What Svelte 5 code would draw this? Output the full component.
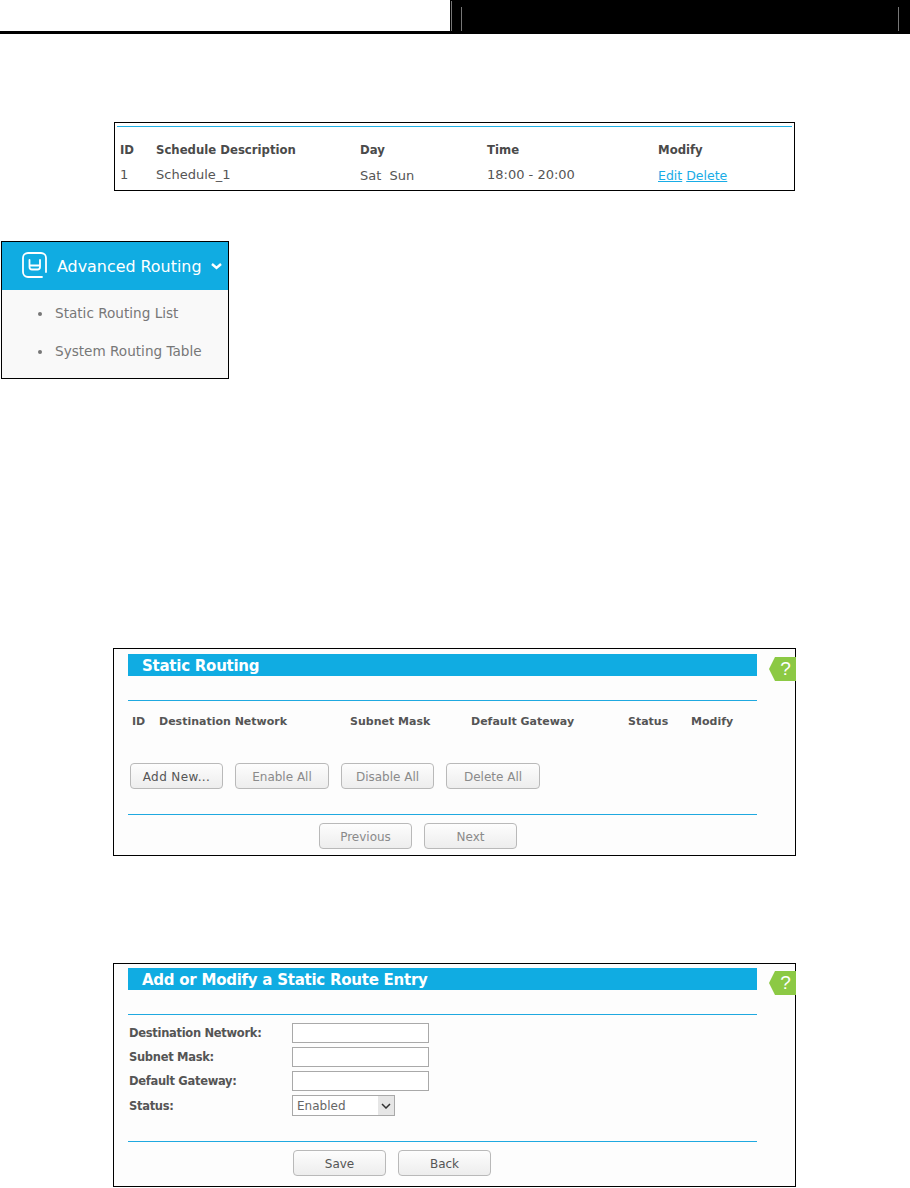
<script>
  const schedCols = ['ID', 'Schedule Description', 'Day', 'Time', 'Modify'];
  const routeCols = ['ID', 'Destination Network', 'Subnet Mask', 'Default Gateway', 'Status', 'Modify'];
  const fields = ['Destination Network:', 'Subnet Mask:', 'Default Gateway:'];
</script>

<div class="page">
  <header class="top">
    <div class="top-left"></div>
    <div class="top-right"><i class="tall"></i><i></i><i class="end"></i></div>
  </header>

  <section class="sched">
    <div class="sched-row heads">
      {#each schedCols as c}<b>{c}</b>{/each}
    </div>
    <div class="sched-row cells">
      <span>1</span><span>Schedule_1</span><span class="low">Sat&nbsp; Sun</span><span>18:00 - 20:00</span>
      <span class="low links"><a href="#e">Edit</a> <a href="#d">Delete</a></span>
    </div>
  </section>

  <nav class="menu">
    <div class="menu-head">
      <svg class="router" viewBox="0 0 25 26" width="25" height="26" fill="none" stroke="#fff" stroke-width="1.800" stroke-linecap="round">
        <path d="M24 20V6a5 5 0 0 0-5-5H6a5 5 0 0 0-5 5v14a5 5 0 0 0 5 5h14" />
        <path d="M7.500 8v7a2.500 2.500 0 0 0 2.500 2.500h5.500A2.500 2.500 0 0 0 18 15V8M7.500 13.500H18" />
      </svg>
      <span class="menu-title">Advanced Routing</span>
      <svg class="chev" viewBox="0 0 11 7" width="11" height="7" fill="none" stroke="#fff" stroke-width="2.400">
        <path d="M1 1l4.500 4 4.500-4" />
      </svg>
    </div>
    <ul>
      <li>Static Routing List</li>
      <li>System Routing Table</li>
    </ul>
  </nav>

  <section class="panel routing">
    <div class="bar">Static Routing</div>
    <span class="help">?</span>
    <hr class="rule first" />
    <div class="route-heads">
      {#each routeCols as c}<b>{c}</b>{/each}
    </div>
    <div class="actions">
      <button class="dark wide-text">Add New...</button>
      <button class="w94">Enable All</button>
      <button>Disable All</button>
      <button class="w94">Delete All</button>
    </div>
    <hr class="rule second" />
    <div class="pager">
      <button>Previous</button>
      <button>Next</button>
    </div>
  </section>

  <section class="panel entry">
    <div class="bar">Add or Modify a Static Route Entry</div>
    <span class="help">?</span>
    <hr class="rule first" />
    <div class="form">
      {#each fields as f}
        <label for={f}>{f}</label>
        <input id={f} type="text" />
      {/each}
      <label for="status">Status:</label>
      <div class="select">
        <select id="status"><option>Enabled</option><option>Disabled</option></select>
        <span class="arrow">
          <svg viewBox="0 0 10 6" width="10" height="6" fill="none" stroke="#333" stroke-width="1.500"><path d="M1 1l4 4 4-4" /></svg>
        </span>
      </div>
    </div>
    <hr class="rule third" />
    <div class="save">
      <button class="dark">Save</button>
      <button class="dark">Back</button>
    </div>
  </section>
</div>

<style>
  :global(body) { margin: 0; background: #fff; }
  .page {
    width: 910px;
    height: 1188px;
    overflow: hidden;
    font-family: "DejaVu Sans", Verdana, sans-serif;
    color: #4d4d4d;
  }

  .top { display: flex; height: 34px; }
  .top-left { width: 450px; box-sizing: border-box; border-bottom: 3px solid #000; }
  .top-right {
    flex: 1;
    background: #000;
    display: flex;
    padding: 0 11px 3px 1px;
    box-sizing: border-box;
  }
  .top-right i { width: 1px; background: #777; margin: 7px 0 0 9px; }
  .top-right .tall { margin: 1px 0 0 0; }
  .top-right .end { margin-left: auto; }

  .sched {
    box-sizing: border-box;
    margin: 88px 0 0 114px;
    width: 681px;
    height: 69px;
    border: 1px solid #000;
    padding: 3px 2px 0;
    font-size: 13px;
    color: #555;
  }
  .sched-row {
    display: grid;
    grid-template-columns: 36px 204px 127px 171px 1fr;
    padding-left: 3px;
  }
  .heads {
    box-sizing: border-box;
    border-top: 1px solid #1fb0e4;
    height: 36px;
    align-items: end;
    padding-bottom: 4px;
    line-height: 16px;
    font-size: 11.700px;
    font-weight: 700;
    color: #4a4a4a;
  }
  .cells { line-height: 16px; padding-top: 5px; }
  .low { padding-top: 1px; }
  .links { font-size: 12.500px; }
  .links a { color: #19ace6; }

  .menu {
    box-sizing: border-box;
    margin: 50px 0 0 1px;
    width: 228px;
    height: 138px;
    border: 1px solid #000;
    background: #f9f9f9;
  }
  .menu-head {
    height: 48px;
    background: #10ace2;
    display: flex;
    align-items: center;
    color: #fff;
    padding-left: 20px;
    gap: 10px;
  }
  .router { flex: none; margin-top: -2px; }
  .menu-title { font-size: 15.900px; white-space: nowrap; }
  .chev { margin-left: 0; flex: none; }
  .menu ul { margin: 0; padding: 0 0 0 53px; list-style: none; font-size: 13.600px; color: #777; }
  .menu li { position: relative; height: 38px; line-height: 20px; }
  .menu li:first-child { margin-top: 13px; }
  .menu li::before {
    content: "";
    position: absolute;
    left: -17px;
    top: 9px;
    width: 4px;
    height: 4px;
    border-radius: 50%;
    background: #777;
  }

  .panel {
    position: relative;
    box-sizing: border-box;
    margin-left: 113px;
    width: 683px;
    border: 1px solid #000;
    padding: 5px 38px 0 14px;
    background: #fdfdfd;
  }
  .routing { margin-top: 269px; height: 208px; }
  .entry { margin-top: 107px; height: 224px; padding-top: 4px; }
  .entry .help { top: 7px; }
  .bar {
    height: 22px;
    line-height: 24px;
    background: #10ace2;
    color: #fff;
    font-weight: 700;
    font-size: 15px;
    letter-spacing: -0.25px;
    padding-left: 14px;
  }
  .help {
    position: absolute;
    right: -1px;
    top: 8px;
    width: 27px;
    height: 24px;
    background: #8cc944;
    color: #fff;
    font: 19px/24px "Liberation Sans", sans-serif;
    text-align: center;
    text-indent: 6px;
    clip-path: polygon(0 50%, 6px 0, 100% 0, 100% 100%, 6px 100%);
  }
  .rule { border: 0; margin: 0; height: 1px; background: #1fa9e0; }
  .first { margin-top: 24px; }
  .route-heads {
    display: grid;
    grid-template-columns: 27px 191px 121px 157px 63px 1fr;
    padding-left: 4px;
    margin-top: 13px;
    font-size: 11px;
    line-height: 16px;
    color: #555;
  }
  .actions { display: flex; gap: 12px; margin: 33px 0 0 2px; }
  .second { margin-top: 25px; }
  .pager { display: flex; gap: 12px; margin: 8px 0 0 191px; }
  button {
    box-sizing: border-box;
    width: 93px;
    height: 26px;
    padding: 1px 0 0;
    border: 1px solid #b9b9b9;
    border-radius: 4px;
    background: linear-gradient(#fdfdfd, #ededed);
    font: 12px "DejaVu Sans", sans-serif;
    color: #8a8a8a;
  }
  button.dark { color: #555; }
  button.wide-text { letter-spacing: 0.4px; }
  button.w94 { width: 94px; }

  .form {
    display: grid;
    grid-template-columns: 163px 137px;
    row-gap: 4px;
    margin: 8px 0 0 1px;
    align-items: center;
    justify-content: start;
    font-size: 11.500px;
    letter-spacing: -0.3px;
    font-weight: 700;
    color: #555;
  }
  .form input {
    box-sizing: border-box;
    width: 137px;
    height: 20px;
    border: 1px solid #a9a9a9;
    background: #fff;
    padding: 0;
  }
  .select { position: relative; width: 103px; height: 21px; }
  .select select {
    box-sizing: border-box;
    width: 103px;
    height: 21px;
    appearance: none;
    border: 1px solid #a9a9a9;
    border-radius: 0;
    background: #fff;
    padding: 0 0 0 4px;
    font: 12px "DejaVu Sans", sans-serif;
    color: #666;
  }
  .arrow {
    position: absolute;
    right: 1px;
    top: 1px;
    bottom: 1px;
    width: 16px;
    background: #e6e6e6;
    display: flex;
    align-items: center;
    justify-content: center;
    pointer-events: none;
  }
  .third { margin-top: 25px; }
  .save { display: flex; gap: 12px; margin: 8px 0 0 165px; }
</style>
